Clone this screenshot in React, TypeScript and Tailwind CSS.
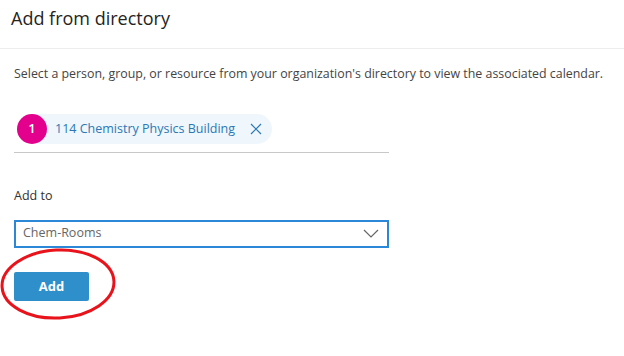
import { useState } from "react";

const font = { fontFamily: '"Segoe UI", "Open Sans", "Noto Sans", sans-serif' };

export default function App() {
  const [room, setRoom] = useState("Chem-Rooms");

  return (
    <div className="relative w-[624px] h-[356px] bg-white overflow-hidden" style={font}>
      <div className="h-[49px] border-b border-[#ededed] pl-[11px] pt-[6px]">
        <h1 className="text-[18px] leading-[24px] text-[#252423]">Add from directory</h1>
      </div>

      <div className="px-[14px]">
        <p className="mt-[16px] text-[12.4px] leading-[18px] text-[#444]">
          Select a person, group, or resource from your organization's directory to view the associated calendar.
        </p>

        <div className="w-[375px] mt-[31px] pb-[8px] border-b border-[#c8c8c8]">
          <div className="inline-flex items-center h-[30px] rounded-full bg-[#eff6fc] pr-[10px] ml-[3px]">
            <span className="w-[30px] h-[30px] rounded-full bg-[#e3008c] text-white text-[13px] font-semibold flex items-center justify-center">
              1
            </span>
            <span className="ml-[8px] text-[12.5px] text-[#2b78b5]">114 Chemistry Physics Building</span>
            <svg className="ml-[15px]" width="12" height="12" viewBox="0 0 12 12">
              <path d="M1 1L11 11M11 1L1 11" stroke="#2b78b5" strokeWidth="1.2" fill="none" />
            </svg>
          </div>
        </div>

        <label className="block mt-[34px] text-[12.5px] text-[#323130]">Add to</label>

        <div className="mt-[14px] w-[375px] h-[28px] border-2 border-[#2b88d8] flex items-center justify-between pl-[7px] pr-[8px]">
          <span className="text-[12.5px] text-[#666]">{room}</span>
          <svg width="16" height="9" viewBox="0 0 16 9" onClick={() => setRoom("Chem-Rooms")}>
            <path d="M1 1L8 8L15 1" stroke="#666" strokeWidth="1.2" fill="none" />
          </svg>
        </div>

        <button className="mt-[24px] w-[75px] h-[29px] rounded-[2px] bg-[#2e8fca] text-white text-[13px] font-bold">
          Add
        </button>
      </div>

      <svg className="absolute left-0 top-[246px]" width="120" height="76" viewBox="0 0 120 76">
        <ellipse cx="58" cy="38" rx="56" ry="34" transform="rotate(-3 58 38)" stroke="#e8131b" strokeWidth="3" fill="none" />
      </svg>
    </div>
  );
}
